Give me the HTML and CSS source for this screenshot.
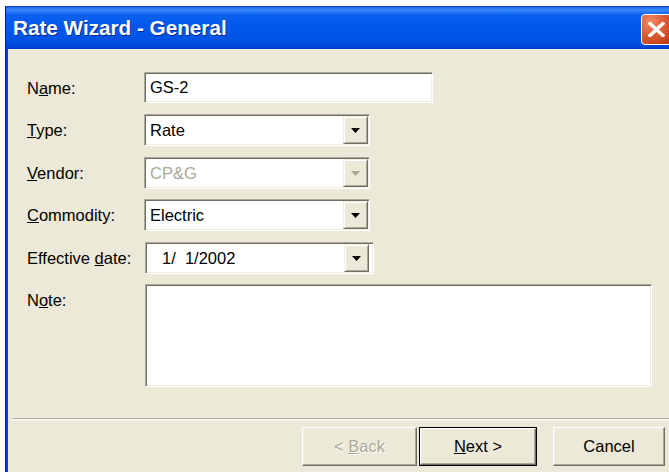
FILE: index.html
```html
<!DOCTYPE html>
<html lang="en">
<head>
<meta charset="utf-8">
<title>Rate Wizard - General</title>
<link rel="stylesheet" href="styles.css">
</head>
<body>
<div class="window">
  <div class="titlebar">
    <span class="title">Rate Wizard - General</span>
    <span class="close">
      <svg width="17" height="15" viewBox="0 0 17 15"><path d="M2 1.5 L15 13.5 M15 1.5 L2 13.5" stroke="#fff" stroke-width="3.4" stroke-linecap="square"/></svg>
    </span>
  </div>
  <div class="client">
    <div class="form">
      <label class="lbl">N<u>a</u>me:</label>
      <div class="field edit"><span class="value">GS-2</span></div>

      <label class="lbl"><u>T</u>ype:</label>
      <div class="field combo">
        <span class="value">Rate</span>
        <span class="drop"><svg width="9" height="5" viewBox="0 0 9 5"><polygon points="0,0 9,0 4.5,5" fill="#000"/></svg></span>
      </div>

      <label class="lbl"><u>V</u>endor:</label>
      <div class="field combo disabled">
        <span class="value">CP&amp;G</span>
        <span class="drop"><svg width="9" height="5" viewBox="0 0 9 5"><polygon points="0,0 9,0 4.5,5" fill="#aca899"/></svg></span>
      </div>

      <label class="lbl"><u>C</u>ommodity:</label>
      <div class="field combo">
        <span class="value">Electric</span>
        <span class="drop"><svg width="9" height="5" viewBox="0 0 9 5"><polygon points="0,0 9,0 4.5,5" fill="#000"/></svg></span>
      </div>

      <label class="lbl">Effective <u>d</u>ate:</label>
      <div class="field combo date">
        <span class="value">1/&nbsp; 1/2002</span>
        <span class="drop"><svg width="9" height="5" viewBox="0 0 9 5"><polygon points="0,0 9,0 4.5,5" fill="#000"/></svg></span>
      </div>

      <label class="lbl lbl-top">N<u>o</u>te:</label>
      <div class="field memo"></div>
    </div>

    <div class="separator"></div>

    <div class="buttons">
      <div class="btn back">&lt;&nbsp;<u>B</u>ack</div>
      <div class="btn next"><span class="btn-face"><u>N</u>ext&nbsp;&gt;</span></div>
      <div class="btn cancel">Cancel</div>
    </div>
  </div>
</div>
</body>
</html>
```

FILE: styles.css
```css
* {
  box-sizing: border-box;
}

html, body {
  margin: 0;
  height: 472px;
  overflow: hidden;
  background: #ffffff;
}

body {
  font-family: "Liberation Sans", Arial, sans-serif;
  font-size: 16.5px;
  color: #000;
}

/* Window frame */
.window {
  margin: 6px 0 0 5px;
  width: 683px;
  height: 480px;
  background: #0842d4;
  border-left: 1px solid #001c9e;
  border-top: 1px solid #0a3ec2;
  display: flex;
  flex-direction: column;
}

.titlebar {
  height: 42px;
  flex: none;
  display: flex;
  align-items: center;
  padding: 0 16px 0 7px;
  background: linear-gradient(#1a6cf0 0%, #3b8af6 7%, #0d62ee 18%, #0058eb 45%, #0053e4 80%, #0047d6 95%, #003cc6 100%);
}

.title {
  flex: 1;
  color: #fff;
  font-weight: bold;
  font-size: 20.7px;
  line-height: 42px;
  text-shadow: 1px 1px 0 #0b2a8a;
  white-space: nowrap;
}

.close {
  width: 31px;
  height: 31px;
  margin-top: 2px;
  border: 1px solid #fff;
  border-radius: 4px;
  background: radial-gradient(circle at 30% 25%, #ee8c6c 0%, #e06640 35%, #cf4a22 70%, #b83610 100%);
  display: flex;
  align-items: center;
  justify-content: center;
}

/* Client area */
.client {
  flex: 1;
  margin-left: 2px;
  background: #ece9d8;
  padding: 23px 0 0 5px;
  display: flex;
  flex-direction: column;
}

.form {
  display: grid;
  grid-template-columns: 117px auto;
  grid-template-rows: 32px 32px 32px 32px 32px 103px;
  row-gap: 10.4px;
  padding-left: 14px;
  justify-items: start;
}

.lbl {
  line-height: 32px;
  white-space: nowrap;
}

.lbl-top {
  align-self: start;
}

/* Sunken 3D field border */
.field {
  background: #fff;
  border: 1px solid;
  border-color: #aca899 #ffffff #ffffff #aca899;
  box-shadow: inset 1px 1px 0 #716f64, inset -1px -1px 0 #f1efe2;
  padding: 1px;
  display: flex;
  align-items: stretch;
}

.value {
  flex: 1;
  line-height: 28px;
  padding-left: 4px;
  white-space: nowrap;
}

.edit {
  width: 289px;
  height: 31px;
}

.edit .value {
  line-height: 27px;
}

.combo {
  width: 226px;
  height: 32px;
}

.combo.disabled .value {
  color: #aca899;
}

.date {
  width: 229px;
  margin-left: 1px;
  padding-right: 4px;
}

.date .value {
  padding-left: 15px;
}

.drop {
  width: 25px;
  flex: none;
  background: #ece9d8;
  border: 1px solid;
  border-color: #f1efe2 #716f64 #716f64 #f1efe2;
  box-shadow: inset 1px 1px 0 #fff, inset -1px -1px 0 #aca899;
  display: flex;
  align-items: center;
  justify-content: center;
  padding-top: 1px;
}

.memo {
  width: 507px;
  height: 103px;
  margin-left: 1px;
}

/* Etched divider above the buttons */
.separator {
  margin-top: 31px;
  height: 2px;
  border-top: 1px solid #aca899;
  border-bottom: 1px solid #ffffff;
}

.buttons {
  display: flex;
  margin-top: 7px;
  padding-left: 289px;
}

.btn {
  height: 39px;
  background: #ece9d8;
  border: 1px solid;
  border-color: #fff #716f64 #716f64 #fff;
  box-shadow: inset -1px -1px 0 #aca899, inset 1px 1px 0 #f1efe2;
  display: flex;
  align-items: center;
  justify-content: center;
  white-space: nowrap;
}

.back {
  width: 115px;
  color: #aca899;
  text-shadow: 1px 1px 0 #fff;
}

.next {
  width: 118px;
  margin-left: 2px;
  border: 1px solid #000;
  box-shadow: none;
  padding: 0;
  align-items: stretch;
}

.btn-face {
  flex: 1;
  display: flex;
  align-items: center;
  justify-content: center;
  border: 1px solid;
  border-color: #fff #716f64 #716f64 #fff;
  box-shadow: inset -1px -1px 0 #aca899, inset 1px 1px 0 #f1efe2;
}

.cancel {
  width: 112px;
  margin-left: 16px;
}
```
